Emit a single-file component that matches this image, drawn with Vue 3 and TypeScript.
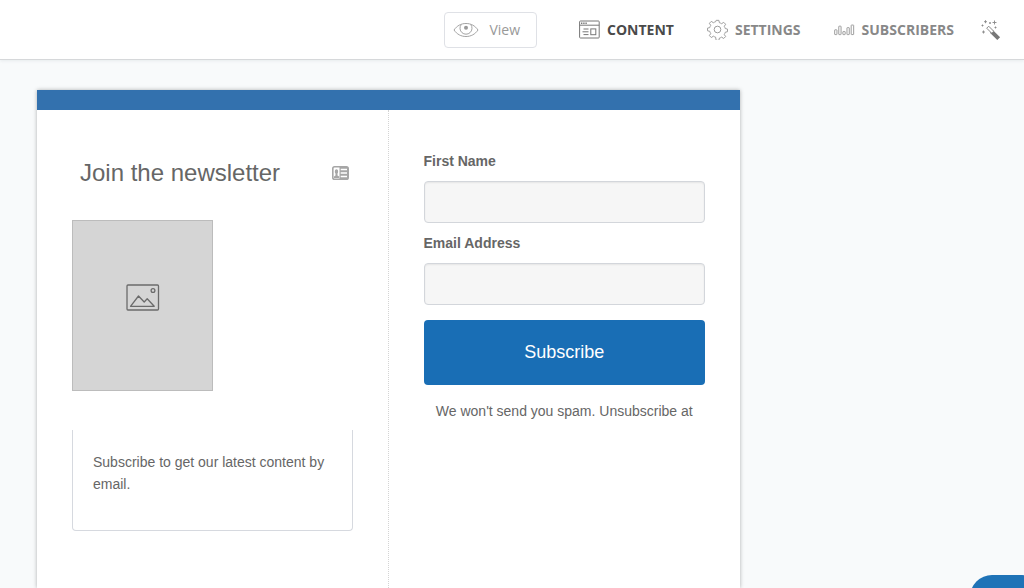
<script setup lang="ts">
import { ref } from 'vue'

interface Field {
  id: string
  label: string
  type: string
}

const fields: Field[] = [
  { id: 'first-name', label: 'First Name', type: 'text' },
  { id: 'email-address', label: 'Email Address', type: 'email' },
]

const values = ref<Record<string, string>>({ 'first-name': '', 'email-address': '' })
</script>

<template>
  <div class="page">
    <header class="topbar">
      <button class="view" type="button">
        <svg width="26" height="16" viewBox="0 0 26 16" fill="none" stroke="#a3a3a3" aria-hidden="true">
          <path d="M1 8C4 3.700 8 1.500 13 1.500S22 3.700 25 8c-3 4.300-7 6.500-12 6.500S4 12.300 1 8z" />
          <path d="M8.200 2.600a6 6 0 1 0 9.600 0" />
          <circle cx="13" cy="5.800" r="2" fill="#999" stroke="none" />
        </svg>
        <span>View</span>
      </button>
      <nav class="nav">
        <a class="link active" href="#content">
          <svg width="21" height="19" viewBox="0 0 21 19" fill="none" stroke="#777" aria-hidden="true">
            <rect x=".6" y="1" width="19.600" height="17" rx=".8" />
            <path d="M.6 5.200h19.600" />
            <path d="M2 3.200h6" stroke-dasharray="1.400 .8" stroke-width="1.400" />
            <path d="M4.500 9h5M3.500 11.800h6M4.500 14.600h5" />
            <rect x="11.800" y="8.900" width="5" height="5.800" />
          </svg>
          <span>CONTENT</span>
        </a>
        <a class="link" href="#settings">
          <svg width="21" height="21" viewBox="0 0 22 22" fill="none" stroke="#999" stroke-linejoin="round" aria-hidden="true">
            <path d="M9.600 1h2.800l.6 2.500q1.200.3 2.300 1l2.200-1.400 2 2-1.400 2.200q.7 1.100 1 2.300l2.400.6v2.700l-2.400.6q-.3 1.200-1 2.300l1.400 2.200-2 2-2.200-1.400q-1.100.7-2.300 1l-.6 2.400H9.600L9 18.600q-1.200-.3-2.300-1L4.500 19l-2-2 1.400-2.200q-.7-1.100-1-2.300L.5 11.900V9.200L2.900 8.600q.3-1.200 1-2.300L2.500 4.100l2-2 2.200 1.400q1.100-.7 2.300-1z" transform="translate(0 .4)" />
            <circle cx="11" cy="11" r="3.500" />
          </svg>
          <span>SETTINGS</span>
        </a>
        <a class="link" href="#subscribers">
          <svg class="bars" width="21" height="12" viewBox="0 0 22 12" fill="none" stroke="#999" aria-hidden="true">
            <rect x=".7" y="5.800" width="2.400" height="5" rx=".4" />
            <rect x="5" y="2" width="2.400" height="8.800" rx=".4" />
            <rect x="9.300" y="7.600" width="2.400" height="3.200" rx=".4" />
            <rect x="13.600" y="3.500" width="2.400" height="7.300" rx=".4" />
            <rect x="18" y=".8" width="2.600" height="10" rx=".4" />
          </svg>
          <span>SUBSCRIBERS</span>
        </a>
        <a class="link wand" href="#design" aria-label="Design">
          <svg width="22" height="22" viewBox="0 0 22 22" fill="none" stroke="#888" aria-hidden="true">
            <path d="M11.300 12.300l7.400 7.400" stroke="#777" stroke-width="4" />
            <path d="M6.700 9.200l2-2 5 5-2 2z" fill="#fff" stroke="#888" />
            <path d="M14.500 1.500v4M12.500 3.500h4M5.500 1.200v3M4 2.700h3M3.500 11.500v3M2 13h3M10 3v2M9 4h2M1.500 6.500h2M2.500 5.500v2M15.500 7.500v2M14.500 8.500h2" stroke-width=".9" />
          </svg>
        </a>
      </nav>
    </header>

    <main class="canvas">
      <article class="card">
        <section class="intro">
          <div class="heading">
            <h1>Join the newsletter</h1>
            <svg width="17" height="14" viewBox="0 0 17 14" aria-hidden="true">
              <rect x=".8" y=".8" width="15.400" height="12.400" rx="1.800" fill="#fff" stroke="#a6a6a6" stroke-width="1.600" />
              <path d="M7.500 1h8.500v12H7.500z" fill="#a6a6a6" />
              <path d="M2 12v-1.600l1.500-1V7.600C2.500 6.300 2.600 3.200 4.500 3.200s2 3.100 1 4.400v1.800l1.700 1V12z" fill="#a6a6a6" />
              <path d="M8.700 3.400h6.300M8.700 7h6.300M8.700 10.600h6.300" stroke="#fff" stroke-width="1.500" />
            </svg>
          </div>
          <div class="picture">
            <svg width="34" height="27" viewBox="0 0 34 27" fill="none" stroke="#6b6b6b" stroke-width="1.300" stroke-linejoin="round" aria-hidden="true">
              <rect x="1" y="1" width="31.500" height="25" rx="1" />
              <circle cx="27" cy="6.500" r="1.900" />
              <path d="M4.500 22.300L12.500 12l5.700 6 3-3.200 7 7.500z" />
            </svg>
          </div>
          <p class="blurb">Subscribe to get our latest content by email.</p>
        </section>

        <form class="signup" @submit.prevent>
          <template v-for="field in fields" :key="field.id">
            <label :for="field.id">{{ field.label }}</label>
            <input :id="field.id" v-model="values[field.id]" :type="field.type" />
          </template>
          <button class="submit" type="submit">Subscribe</button>
          <p class="note">We won't send you spam. Unsubscribe at</p>
        </form>
      </article>
    </main>

    <button class="help" type="button" aria-label="Help"></button>
  </div>
</template>

<style>
body {
  margin: 0;
  overflow: hidden;
}
</style>

<style scoped>
.page {
  display: flex;
  flex-direction: column;
  min-height: 100vh;
  background: #f8fafb;
  color: #666;
  font-family: "Liberation Sans", Arial, sans-serif;
  font-size: 14px;
}

.topbar {
  display: flex;
  align-items: center;
  justify-content: flex-end;
  gap: 42px;
  box-sizing: border-box;
  height: 60px;
  padding-right: 22px;
  background: #fff;
  border-bottom: 1px solid #d6d8da;
  box-shadow: 0 1px 3px rgba(40, 60, 80, 0.08);
  font-family: "Open Sans", sans-serif;
}

.view {
  display: flex;
  align-items: center;
  gap: 10px;
  box-sizing: border-box;
  height: 36px;
  padding: 0 16px 0 8px;
  background: #fff;
  border: 1px solid #dfe1e6;
  border-radius: 4px;
  color: #999;
  font: 14px "Open Sans", sans-serif;
}

.nav {
  display: flex;
  align-items: center;
  gap: 33px;
}

.link {
  display: flex;
  align-items: center;
  gap: 7px;
  color: #888;
  font-size: 14px;
  font-weight: 700;
  text-decoration: none;
}

.link.active {
  color: #4a4a4a;
}

.wand {
  margin-left: -7px;
}

.canvas {
  display: flex;
  flex: 1;
  padding: 30px 284px 0 37px;
}

.card {
  display: grid;
  flex: 1;
  grid-template-columns: 1fr 1fr;
  background: #fff;
  border-top: 20px solid #3371ae;
  box-shadow: 0 0 4px rgba(0, 0, 0, 0.3);
}

.intro {
  padding: 48px 35px 57px;
  border-right: 1px dotted #d4d4d4;
}

.heading {
  display: flex;
  align-items: center;
  justify-content: space-between;
  padding: 0 4px 0 8px;
}

h1 {
  margin: 0;
  font-size: 24px;
  font-weight: 400;
  line-height: 30px;
}

.picture {
  display: flex;
  align-items: center;
  justify-content: center;
  box-sizing: border-box;
  width: 141px;
  height: 171px;
  margin-top: 32px;
  padding-bottom: 17px;
  background: #d5d5d5;
  border: 1px solid #bcbcbc;
}

.blurb {
  margin: 39px 0 0;
  padding: 21px 20px 35px;
  border: 1px solid #d6d9df;
  border-top: 0;
  border-radius: 0 0 4px 4px;
  line-height: 22px;
}

.signup {
  display: flex;
  flex-direction: column;
  padding: 41px 35px 0;
}

label {
  margin-bottom: 10px;
  font-weight: 700;
  line-height: 20px;
}

input {
  box-sizing: border-box;
  width: 100%;
  height: 42px;
  margin-bottom: 10px;
  padding: 0 12px;
  background: #f6f6f6;
  border: 1px solid #d3d6db;
  border-radius: 4px;
  box-shadow: inset 0 1px 2px rgba(0, 0, 0, 0.07);
  color: #666;
  font: 14px "Liberation Sans", Arial, sans-serif;
}

.submit {
  height: 65px;
  margin-top: 5px;
  background: #196eb5;
  border: 0;
  border-radius: 4px;
  color: #fff;
  font: 18px "Liberation Sans", Arial, sans-serif;
}

.note {
  margin: 15px 0 0;
  line-height: 22px;
  text-align: center;
}

.help {
  position: fixed;
  right: -20px;
  bottom: -32px;
  width: 74px;
  height: 45px;
  background: #1f73b7;
  border: 0;
  border-radius: 22px;
}
</style>
